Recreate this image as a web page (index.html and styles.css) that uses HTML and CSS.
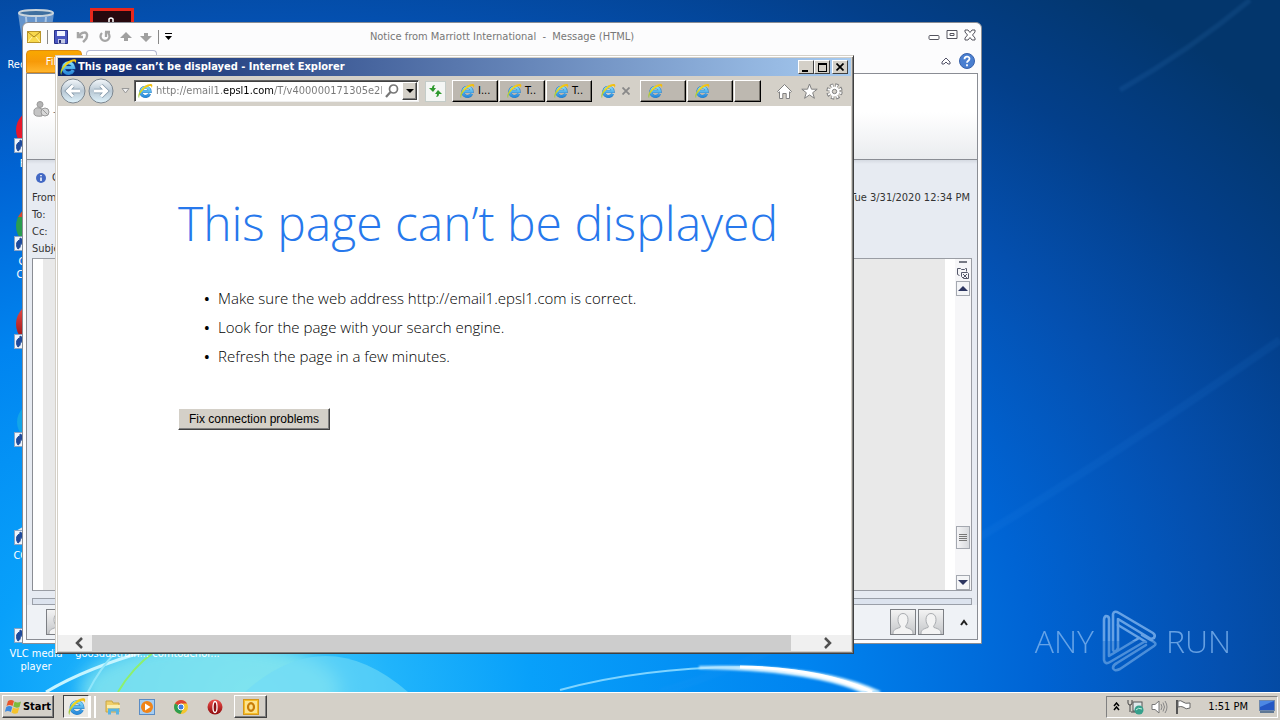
FILE: index.html
```html
<!DOCTYPE html>
<html lang="en">
<head>
<meta charset="utf-8">
<title>Desktop</title>
<link rel="stylesheet" href="styles.css">
</head>
<body>
<svg class="defs" aria-hidden="true">
  <defs>
    <linearGradient id="ieBlue" x1="0" y1="0" x2="0" y2="1"><stop offset="0" stop-color="#7fd8fa"/><stop offset="1" stop-color="#2a8cdc"/></linearGradient>
    <linearGradient id="swoosh" x1="0" y1="1" x2="1" y2="0"><stop offset="0" stop-color="#8cc63c"/><stop offset=".5" stop-color="#f4d81c"/><stop offset="1" stop-color="#f2b90c"/></linearGradient>
    <linearGradient id="orb" x1="0" y1="0" x2="0" y2="1"><stop offset="0" stop-color="#f4f8fb"/><stop offset=".5" stop-color="#b9c8d4"/><stop offset="1" stop-color="#dff3fc"/></linearGradient>
    <linearGradient id="red" x1="0" y1="0" x2="0" y2="1"><stop offset="0" stop-color="#f0504c"/><stop offset="1" stop-color="#8e0a0c"/></linearGradient>
    <linearGradient id="person" x1="0" y1="0" x2="0" y2="1"><stop offset="0" stop-color="#f4f4f4"/><stop offset="1" stop-color="#c4c6c9"/></linearGradient>
    <linearGradient id="mark" gradientUnits="userSpaceOnUse" x1="0" y1="0" x2="0" y2="62"><stop offset=".5" stop-color="#7fb4ee"/><stop offset=".5" stop-color="#5e9ce0"/></linearGradient>
    <filter id="soft"><feGaussianBlur stdDeviation="1"/></filter>
    <filter id="haze"><feGaussianBlur stdDeviation="9"/></filter>
  </defs>
  <symbol id="ie" viewBox="0 0 16 16">
    <path d="M12.600 10.800A4.600 4.600 0 1 1 13 8.500H4.600" fill="none" stroke="#2b7cc4" stroke-width="3.200"/>
    <path d="M12.600 10.800A4.600 4.600 0 1 1 13 8.500H4.600" fill="none" stroke="url(#ieBlue)" stroke-width="2.400"/>
    <path d="M2.100 15.200C-.2 13 3 6.400 7.600 3.300 11 .9 15 .2 15.300 2.200c.1.8-.2 1.800-.7 2.700.1-1.800-1.200-2.200-3.200-1.400C7.500 4.900 3.800 9 2.600 12.300c-.4 1.200-.5 2.100-.5 2.900z" fill="url(#swoosh)"/>
  </symbol>
  <symbol id="link" viewBox="0 0 15 15">
    <rect x=".5" y=".5" width="14" height="14" fill="#eef4fb" stroke="#8aa4c4"/>
    <path d="M4 13C1 9 3 4 6 4V2l5 3-3 4V7C5 8 8 11 4 13z" fill="#1d4a9c" stroke="#1d4a9c"/>
  </symbol>
  <symbol id="user" viewBox="0 0 26 26">
    <rect x=".5" y=".5" width="25" height="25" fill="url(#person)" stroke="#7c7f84"/>
    <path d="M3 25c0-4 2-5 7-6.500 1-.5 0-2-.7-3C7 12 7.500 4.500 13 4.500s6 7.500 3.700 11c-.7 1-1.700 2.500-.7 3 5 1.500 7 2.500 7 6.500" fill="#f3f3f3" stroke="#a9acb0"/>
  </symbol>
</svg>

<main class="desktop">
  <svg class="wallpaper" viewBox="0 0 1280 692" preserveAspectRatio="none" aria-hidden="true">
    <ellipse cx="210" cy="690" rx="130" ry="50" fill="#8ce9ee" opacity=".8" filter="url(#haze)"/>
    <path d="M245 692Q325 620 408 692z" fill="#6fdaf6" opacity=".6"/>
    <path d="M660 692Q850 640 1280 340" fill="none" stroke="#3d9cf5" stroke-width="8" opacity=".08" filter="url(#soft)"/>
    <path d="M1120 90Q1190 50 1250 0" fill="none" stroke="#4a93d8" stroke-width="5" opacity=".12" filter="url(#soft)"/>
    <path d="M46 692Q86 668 150 650" fill="none" stroke="#c6f5ff" stroke-width="3"/>
    <path d="M88 692Q100 668 116 652" fill="none" stroke="#8fe6fb" stroke-width="2"/>
    <path d="M118 692Q132 668 154 652" fill="none" stroke="#8df06c" stroke-width="2"/>
    <path d="M560 690Q640 668 740 667" fill="none" stroke="#7fd4ff" stroke-width="2"/>
    <path d="M700 667Q820 664 880 692H862Q810 670 700 668z" fill="#fff" stroke="#b8e6ff" stroke-width="2" filter="url(#soft)"/>
    <path d="M740 667Q820 668 872 692" fill="none" stroke="#fff" stroke-width="3"/>
  </svg>

  <div class="shortcut recycle">
    <svg width="40" height="46" viewBox="0 0 40 46"><path d="M2 4l6 42h24l6-42z" fill="#7ea6d4" opacity=".8"/><path d="M10 8l3 36M20 8v36M30 8l-3 36" stroke="#a8c4e4" stroke-width="2"/><ellipse cx="20" cy="4" rx="17" ry="3" fill="#3f6f9f" stroke="#c9d4dc" stroke-width="2"/></svg>
    <span>Recycle Bin</span>
  </div>
  <div class="shortcut game"><svg width="44" height="40" viewBox="0 0 44 40"><rect x="1.500" y="1.500" width="41" height="37" fill="#26080e" stroke="#e8281c" stroke-width="3"/><path d="M19 17V11q2-2 4 0v6" fill="none" stroke="#fff" stroke-width="1.500"/></svg></div>
  <div class="shortcut firefox"><svg width="44" height="46" viewBox="0 0 44 46"><circle cx="22" cy="22" r="20" fill="#e8182c"/><use href="#link" y="30" width="15" height="15"/></svg><span>Firefox</span></div>
  <div class="shortcut chrome"><svg width="44" height="46" viewBox="0 0 44 46"><circle cx="22" cy="20" r="20" fill="#2a9d4f"/><path d="M4 11a20 20 0 0 1 36 0z" fill="#d9442f"/><use href="#link" y="30" width="15" height="15"/></svg><span>Google<br>Chrome</span></div>
  <div class="shortcut opera"><svg width="44" height="46" viewBox="0 0 44 46"><ellipse cx="22" cy="20" rx="20" ry="21" fill="url(#red)"/><use href="#link" y="30" width="15" height="15"/></svg></div>
  <div class="shortcut skype"><svg width="44" height="46" viewBox="0 0 44 46"><circle cx="22" cy="20" r="19" fill="#12a5e8"/><use href="#link" y="30" width="15" height="15"/></svg></div>
  <div class="shortcut cleaner"><svg width="44" height="46" viewBox="0 0 44 46"><path d="M0 32l14-8v10z" fill="#dfeaf2"/><use href="#link" y="30" width="15" height="15"/></svg><span>CCleaner</span></div>
  <div class="shortcut vlc"><svg width="44" height="46" viewBox="0 0 44 46"><use href="#link" y="30" width="15" height="15"/></svg><span>VLC media<br>player</span></div>
  <div class="shortcut file-a"><span>goosdustrain...</span></div>
  <div class="shortcut file-b"><span>comtoachor...</span></div>

  <section class="mail" aria-label="Message">
    <header class="mail-title">
      <div class="quick">
        <svg width="14" height="12" viewBox="0 0 14 12"><rect x=".5" y=".5" width="13" height="11" fill="#f8d84c" stroke="#b8942a"/><path d="M1 11l4-5M13 11L9 6" fill="none" stroke="#fff3b0"/><path d="M1 1l6 5 6-5" fill="none" stroke="#a98420"/></svg>
        <i class="bar"></i>
        <button aria-label="Save"><svg width="14" height="14" viewBox="0 0 14 14"><path d="M.5.5h13v13h-13z" fill="#4a56c0" stroke="#27308a"/><path d="M3 1h8v5H3z" fill="#f0f3ff"/><path d="M4 9h7v4.500H4z" fill="#c3c9e4"/><path d="M5 10h2v3H5z" fill="#252c74"/></svg></button>
        <button aria-label="Undo"><svg width="14" height="14" viewBox="0 0 14 14"><path d="M2 2v5h5M3 6c2-4 9-5 8 0 0 3-2 4-4 6" fill="none" stroke="#a5a5a5" stroke-width="2.500"/></svg></button>
        <button aria-label="Redo"><svg width="14" height="14" viewBox="0 0 14 14"><path d="M4 3a4.500 4.500 0 1 0 6 0M7 2h5M8 2v5" fill="none" stroke="#a5a5a5" stroke-width="2.300"/></svg></button>
        <button aria-label="Previous"><svg width="12" height="10" viewBox="0 0 12 10"><path d="M6 0l6 6H8v3H4V6H0z" fill="#a0a0a0"/></svg></button>
        <button aria-label="Next"><svg width="12" height="10" viewBox="0 0 12 10"><path d="M6 10L0 4h4V1h4v3h4z" fill="#a0a0a0"/></svg></button>
        <i class="bar"></i>
        <button aria-label="Customize"><svg width="7" height="7" viewBox="0 0 7 7"><path d="M0 0h7v1H0zM0 3h7L3.500 7z"/></svg></button>
      </div>
      <h2>Notice from Marriott International&nbsp; -&nbsp; Message (HTML)</h2>
      <div class="mail-controls">
        <button aria-label="Minimize"><svg width="12" height="12" viewBox="0 0 12 12"><rect x="1" y="6.500" width="10" height="4" rx="1" fill="#fff" stroke="#55555f"/></svg></button>
        <button aria-label="Restore"><svg width="12" height="12" viewBox="0 0 12 12"><path d="M1 1.500h10v8H1zM4 4.500h4v2H4z" fill="#fff" stroke="#55555f"/></svg></button>
        <button aria-label="Close"><svg width="12" height="12" viewBox="0 0 12 12"><path d="M1 1h3l2 2.500L8 1h3v2L8.500 6 11 9v2H8L6 8.500 4 11H1V9l2.500-3L1 3z" fill="#fff" stroke="#55555f"/></svg></button>
      </div>
    </header>
    <div class="mail-tabs">
      <button class="file-tab">File</button><button class="message-tab" aria-label="Message"></button>
      <div class="help"><svg width="10" height="8" viewBox="0 0 10 8"><path d="M1 5l4-4 4 4v2H7L5 5 3 7H1z" fill="#fff" stroke="#55556a"/></svg>
      <button aria-label="Help"><svg width="16" height="16" viewBox="0 0 16 16"><circle cx="8" cy="8" r="7.500" fill="#4a7fd0" stroke="#3862ac"/><path d="M5.500 6.200c0-3.500 5-3.300 5-.4 0 2-2.500 2-2.500 4M8 11.200v2" fill="none" stroke="#fff" stroke-width="1.800"/></svg></button></div>
    </div>
    <div class="ribbon">
      <svg width="18" height="16" viewBox="0 0 18 16"><circle cx="7" cy="3.500" r="3" fill="#b4b4b4" stroke="#999"/><path d="M1 9q2-4 8-1v7q-7 1-8-2z" fill="#c4c4c4" stroke="#999"/><circle cx="12" cy="11" r="4" fill="#d8d8d8" stroke="#999"/><path d="M9.500 8.500l5 5" stroke="#999"/></svg><span>-</span>
    </div>
    <div class="mail-head">
      <p class="info"><svg width="10" height="10" viewBox="0 0 10 10"><circle cx="5" cy="5" r="5" fill="#4268c4"/><path d="M5 2v1.200M5 4.500V8" stroke="#fff" stroke-width="1.500"/></svg><span>Click here</span></p>
      <p><span>From:</span><time>Tue 3/31/2020 12:34 PM</time></p>
      <p>To:</p>
      <p>Cc:</p>
      <p>Subject:</p>
    </div>
    <div class="mail-body">
      <div class="paper"></div>
      <div class="vscroll">
        <i class="split"></i>
        <svg width="14" height="14" viewBox="0 0 14 14"><path d="M1.500 2.500h3l1 1h3l1-1h1v3M1.500 2.500v6l2 1M5.500 6.500h6l1 1v5h-5l-2-2zM7 8l4 4M11 8l-4 4" fill="none" stroke="#55586a"/></svg>
        <button aria-label="Scroll up"><svg width="10" height="6" viewBox="0 0 10 6"><path d="M0 5l5-5 5 5z" fill="#2c3560"/></svg></button>
        <i class="track"></i>
        <button class="grip" aria-label="Scroll position"><svg width="8" height="8" viewBox="0 0 8 8"><path d="M0 .5h8M0 2.500h8M0 4.500h8M0 6.500h8" stroke="#777"/></svg></button>
        <i class="track short"></i>
        <button aria-label="Scroll down"><svg width="10" height="6" viewBox="0 0 10 6"><path d="M0 0h10L5 5z" fill="#2c3560"/></svg></button>
      </div>
    </div>
    <div class="splitter"></div>
    <footer class="people">
      <svg width="26" height="26"><use href="#user"/></svg>
      <span class="grow"></span>
      <svg width="26" height="26"><use href="#user"/></svg>
      <svg width="26" height="26"><use href="#user"/></svg>
      <button aria-label="Expand"><svg width="8" height="7" viewBox="0 0 8 7"><path d="M1 6l3-4 3 4" fill="none" stroke="#222" stroke-width="2"/></svg></button>
    </footer>
  </section>

  <section class="browser" aria-label="Internet Explorer">
    <header class="titlebar">
      <svg width="18" height="18"><use href="#ie"/></svg>
      <h2>This page can’t be displayed - Internet Explorer</h2>
      <div class="controls">
        <button aria-label="Minimize"><svg width="9" height="9" viewBox="0 0 9 9"><path d="M0 7h6v2H0z"/></svg></button>
        <button aria-label="Maximize"><svg width="9" height="9" viewBox="0 0 9 9"><path d="M0 0h9v9H0zM1 2v6h7V2z" fill-rule="evenodd"/></svg></button>
        <button class="close" aria-label="Close"><svg width="8" height="8" viewBox="0 0 8 8"><path d="M.5.5l7 7M7.500.5l-7 7" stroke="#000" stroke-width="1.700"/></svg></button>
      </div>
    </header>
    <nav class="toolbar">
      <div class="nav">
        <button aria-label="Back"><svg width="26" height="26" viewBox="0 0 26 26"><circle cx="13" cy="13" r="12" fill="url(#orb)" stroke="#7d8790"/><path d="M20 13H8M13 7.500L7.500 13l5.500 5.500" fill="none" stroke="#8196a8" stroke-width="4.500"/><path d="M20 13H8M13 7.500L7.500 13l5.500 5.500" fill="none" stroke="#fff" stroke-width="3"/></svg></button>
        <button aria-label="Forward"><svg width="26" height="26" viewBox="0 0 26 26"><circle cx="13" cy="13" r="12" fill="url(#orb)" stroke="#7d8790"/><path d="M6 13h12M13 7.500l5.500 5.500-5.500 5.500" fill="none" stroke="#8196a8" stroke-width="4.500"/><path d="M6 13h12M13 7.500l5.500 5.500-5.500 5.500" fill="none" stroke="#fff" stroke-width="3"/></svg></button>
        <button class="recent" aria-label="Recent pages"><svg width="9" height="6" viewBox="0 0 9 6"><path d="M1 .5h7L4.500 5z" fill="#eee" stroke="#999"/></svg></button>
      </div>
      <div class="address">
        <svg width="16" height="16"><use href="#ie"/></svg>
        <input type="text" aria-label="Address" value="http://email1.epsl1.com/T/v400000171305e2ba">
        <svg width="14" height="14" viewBox="0 0 14 14"><circle cx="8.500" cy="5" r="4" fill="#fff" stroke="#777" stroke-width="1.700"/><path d="M5.500 8L1 13" stroke="#777" stroke-width="2.200"/></svg>
        <button class="raised" aria-label="Address list"><svg width="8" height="4" viewBox="0 0 8 4"><path d="M0 0h8L4 4z"/></svg></button>
      </div>
      <button class="refresh" aria-label="Refresh"><svg width="15" height="14" viewBox="0 0 15 14"><path d="M7 1Q4 1 4 4H1l4 4 3-4H6Q6 2 7 1zM8 13q3 0 3-3h3l-4-4-3 4h2q0 2-1 3z" fill="#2e9a2e"/></svg></button>
      <div class="tabs">
        <button class="tab"><svg width="16" height="16"><use href="#ie"/></svg>I...</button>
        <button class="tab"><svg width="16" height="16"><use href="#ie"/></svg>T..</button>
        <button class="tab"><svg width="16" height="16"><use href="#ie"/></svg>T..</button>
        <button class="tab current" aria-label="Current tab"><svg width="16" height="16"><use href="#ie"/></svg><svg width="8" height="8" viewBox="0 0 8 8"><path d="M.5.5l7 7M7.500.5l-7 7" stroke="#888" stroke-width="1.800"/></svg></button>
        <button class="tab" aria-label="Tab 5"><svg width="16" height="16"><use href="#ie"/></svg></button>
        <button class="tab" aria-label="Tab 6"><svg width="16" height="16"><use href="#ie"/></svg></button>
        <button class="tab new" aria-label="New tab"></button>
      </div>
      <div class="tools">
        <button aria-label="Home"><svg width="17" height="17" viewBox="0 0 17 17"><path d="M8.500 1.500l7 7-1.200 1-.8-.7V15.500h-3.300v-5H6.800v5H3.500V8.800l-.8.700-1.200-1z" fill="#fff" stroke="#808080"/></svg></button>
        <button aria-label="Favorites"><svg width="17" height="17" viewBox="0 0 17 17"><path d="M8.500 1l2 5.200h5.700l-4.500 3.500 1.700 5.600-4.900-3.400-4.900 3.400 1.700-5.600L.8 6.200h5.700z" fill="#fff" stroke="#808080"/></svg></button>
        <button aria-label="Tools"><svg width="17" height="17" viewBox="0 0 17 17"><circle cx="8.500" cy="8.500" r="6.500" fill="none" stroke="#808080" stroke-width="3.400" stroke-dasharray="3.200 1.900"/><circle cx="8.500" cy="8.500" r="6" fill="none" stroke="#fff" stroke-width="2.400" stroke-dasharray="1.700 3" stroke-dashoffset="-.7"/><circle cx="8.500" cy="8.500" r="4.800" fill="#fff"/><circle cx="8.500" cy="8.500" r="2.200" fill="#d4d0c8" stroke="#808080"/></svg></button>
      </div>
    </nav>
    <article class="page">
      <h1>This page can’t be displayed</h1>
      <ul>
        <li>Make sure the web address http://email1.epsl1.com is correct.</li>
        <li>Look for the page with your search engine.</li>
        <li>Refresh the page in a few minutes.</li>
      </ul>
      <button class="raised fix">Fix connection problems</button>
    </article>
    <div class="hscroll">
      <button aria-label="Scroll left"><svg width="10" height="12" viewBox="0 0 10 12"><path d="M8 1L3 6l5 5" fill="none" stroke="#505050" stroke-width="2.500"/></svg></button>
      <i class="thumb"></i>
      <button aria-label="Scroll right"><svg width="10" height="12" viewBox="0 0 10 12"><path d="M2 1l5 5-5 5" fill="none" stroke="#505050" stroke-width="2.500"/></svg></button>
    </div>
  </section>

  <div class="watermark">
    <span>ANY</span>
    <svg width="56" height="62" viewBox="0 0 56 62" fill="none" stroke="url(#mark)" stroke-width="2.600" stroke-linejoin="round" stroke-linecap="round"><path d="M7 9Q7 6 4 6Q2 7 2 10V50Q3 55 8 52L42 32M7 9V46L37 28"/><path d="M16 38Q13 44 11 40V4Q12 0 17 3L51 23Q54 25 52 28L49 29 16 9V38"/><path d="M16 15L44 32M40 25L52 32Q55 34 52 36L18 59Q12 62 11 58Q11 55 15 53L44 35"/></svg>
    <span>RUN</span>
  </div>
</main>

<footer class="taskbar">
  <button class="raised start"><svg width="17" height="16" viewBox="0 0 17 16"><path d="M3 2q3-2 6 0L7.500 7q-3-2-6 0z" fill="#e8562c"/><path d="M9.600 2.500q3 2 6.400 0L14.500 8q-3 1.500-6.200-.5z" fill="#7dbb3c"/><path d="M1.300 8q3-2 6 0L5.800 13q-3-2-6 0z" fill="#3e8be0"/><path d="M8 8.500q3 2 6.200.3L12.700 14q-3 1.700-6.200-.5z" fill="#f5c32c"/></svg>Start</button>
  <div class="launch">
    <button class="pressed" aria-label="Internet Explorer"><svg width="19" height="19"><use href="#ie"/></svg></button>
    <i class="edges"></i>
    <button aria-label="Explorer"><svg width="16" height="16" viewBox="0 0 16 16"><path d="M1 2h6l1 2h6v9H1z" fill="#f0cf68" stroke="#c8a644"/><path d="M2 6h13v3H2z" fill="#fbeeb0"/><path d="M3 15.500v-6h11v6h-3v-3H6v3z" fill="#58b4e4"/></svg></button>
    <button aria-label="Media Player"><svg width="16" height="16" viewBox="0 0 16 16"><rect x=".5" y=".5" width="15" height="15" fill="#a5cdf2" stroke="#5a8cc4"/><circle cx="8" cy="8" r="6" fill="#f08418"/><path d="M6 4.500v7L11.500 8z" fill="#fff"/></svg></button>
    <button aria-label="Chrome"><svg width="14" height="14" viewBox="0 0 14 14"><circle cx="7" cy="7" r="7" fill="#f4c62e"/><path d="M7 7L1 3.500A7 7 0 0 1 13 3.500H7z" fill="#dc4434"/><path d="M7 7L1 3.500A7 7 0 0 0 6.500 14L9 9z" fill="#2e9e50"/><circle cx="7" cy="7" r="3" fill="#3f7de0" stroke="#fff"/></svg></button>
    <button aria-label="Opera"><svg width="16" height="16" viewBox="0 0 16 16"><circle cx="8" cy="8" r="7.500" fill="url(#red)"/><ellipse cx="8" cy="8" rx="2" ry="5.500" fill="#8d1013" stroke="#fff" stroke-width="1.300"/></svg></button>
    <button class="raised app" aria-label="Outlook"><svg width="16" height="16" viewBox="0 0 16 16"><rect x=".5" y=".5" width="15" height="15" fill="#f6bd28" stroke="#d6971a"/><path d="M2 2h12v12H2z" fill="#fde38c"/><ellipse cx="8" cy="8" rx="3" ry="3.800" fill="none" stroke="#c87d08" stroke-width="2.200"/></svg></button>
  </div>
  <div class="tray">
    <svg width="7" height="9" viewBox="0 0 7 9"><path d="M1 4l2.500-3L6 4M1 8l2.500-3L6 8" fill="none" stroke="#000" stroke-width="1.500"/></svg>
    <svg width="17" height="16" viewBox="0 0 17 16"><path d="M1 1v3q0 2 2 2v7M5 1v3q0 2-2 2" fill="none" stroke="#444"/><rect x="6" y="3" width="9" height="9" fill="#dfe8ea" stroke="#555"/><path d="M4 13h7" stroke="#444"/><circle cx="12" cy="11" r="4.500" fill="#37a08c"/><path d="M9 11q2-3 6-1" fill="none" stroke="#c6f0e0"/></svg>
    <svg width="17" height="16" viewBox="0 0 17 16"><path d="M1 5.500h3L8 2v12l-4-3.500H1z" fill="#fff" stroke="#777"/><path d="M10 5q2 3 0 6M12 3.500q3 4.500 0 9M14 2q4 6 0 12" fill="none" stroke="#888"/></svg>
    <svg width="17" height="16" viewBox="0 0 17 16"><path d="M2 1v14" stroke="#555" stroke-width="2"/><path d="M3 2q3-1 5 1 2 2 7 1v5q-4 2-7-1-2-1-5 0z" fill="#fff" stroke="#666"/></svg>
    <time>1:51 PM</time>
    <svg width="16" height="15" viewBox="0 0 16 15"><rect x=".5" y="1.500" width="15" height="10" fill="#2458c4" stroke="#6f88ac"/><path d="M1 2h14L1 8z" fill="#4c88e4"/><path d="M1 13h14" stroke="#607894" stroke-width="2"/></svg>
  </div>
</footer>
</body>
</html>
```
FILE: styles.css
```css
* { box-sizing: border-box; }
body {
  margin: 0;
  height: 100vh;
  display: flex;
  flex-direction: column;
  overflow: hidden;
  font: 11px/14px "DejaVu Sans Condensed", "DejaVu Sans", sans-serif;
  color: #000;
}
h1, h2, p, ul { margin: 0; padding: 0; font-weight: normal; font-size: inherit; }
svg { display: block; flex: none; }
button { font: inherit; color: inherit; background: none; border: 0; padding: 0; display: flex; align-items: center; justify-content: center; flex: none; }
.defs { position: absolute; width: 0; height: 0; }
.grow { flex: 1; }
.raised { background: #d4d0c8; border: 1px solid; border-color: #fff #404040 #404040 #fff; box-shadow: inset -1px -1px #808080; }

.desktop {
  flex: 1;
  position: relative;
  overflow: hidden;
  background: radial-gradient(1150px 800px at 20% 100%, #4ccff8 0%, #20b4fb 12%, #08a0fa 24%, #0084f0 48%, #0064d4 68%, #0450b0 84%, #033f8a 100%, #03366c 115%);
}
.wallpaper { position: absolute; inset: 0; width: 100%; height: 100%; }
.shortcut { position: absolute; left: 0; width: 72px; display: flex; flex-direction: column; align-items: center; text-align: center; color: #fff; line-height: 13px; gap: 3px; }
.recycle { top: 9px; }
.game { left: 76px; top: 8px; }
.firefox { top: 108px; }
.chrome { top: 206px; }
.opera { top: 304px; }
.skype { top: 402px; }
.cleaner { top: 500px; }
.vlc { top: 598px; }
.file-a { left: 76px; top: 647px; }
.file-b { left: 150px; top: 647px; }

.mail {
  position: absolute; left: 22px; top: 22px; right: 298px; bottom: 48px;
  display: flex; flex-direction: column;
  padding: 0 3px 3px;
  background: #fcfcfd;
  border: 1px solid #8a8d94;
  border-radius: 6px 6px 0 0;
}
.mail-title { height: 27px; display: grid; grid-template-columns: 1fr auto 1fr; align-items: center; color: #777; }
.quick { display: flex; align-items: center; gap: 8px; padding-left: 1px; }
.quick .bar { margin: 0 -2px; }
.bar { width: 1px; height: 14px; background: #888; }
.mail-controls { display: flex; justify-content: flex-end; gap: 6px; padding: 0 2px 4px 0; }
.mail-tabs { height: 24px; display: flex; gap: 4px; border-bottom: 1px solid #8a8d94; }
.file-tab { width: 56px; color: #fff; background: linear-gradient(#f9a800, #f79a08 50%, #ffb52c); border: 1px solid #dc8a10; border-radius: 4px 4px 0 0; }
.message-tab { width: 71px; background: #fff; border: 1px solid #b4b8d0; border-bottom: 0; border-radius: 4px 4px 0 0; }
.help { flex: 1; display: flex; justify-content: flex-end; align-items: center; gap: 8px; padding: 0 3px 2px 0; }
.ribbon { height: 86px; display: flex; gap: 2px; padding: 27px 0 0 6px; background: linear-gradient(#fff 45%, #eaecef); border: 1px solid #8a8d94; border-width: 0 1px 1px; color: #777; line-height: 22px; }
.mail-head { padding: 9px 7px 0 5px; line-height: 17px; background: linear-gradient(#d5dae2, #e7ebf2 4px); border: 1px solid #8a8d94; border-width: 0 1px; color: #333; display: flex; flex-direction: column; height: 98px; }
.mail-head p { display: flex; justify-content: space-between; }
.mail-head .info { justify-content: flex-start; align-items: center; gap: 6px; padding: 0 0 3px 4px; }
.mail-body { flex: 1; display: flex; border: 1px solid #8a8d94; border-width: 0 1px; background: #e7ebf2; padding: 0 5px; }
.paper { flex: 1; background: #e9e9e9; border: 1px solid #9a9da4; border-width: 1px 0 1px 1px; border-left-color: #8a8d94; box-shadow: inset 10px 0 #fff, inset -10px 0 #fff; }
.vscroll { width: 17px; display: flex; flex-direction: column; align-items: center; gap: 1px; border: 1px solid #9a9da4; border-left: 0; background: #f6f6f8; padding-top: 2px; }
.split { width: 8px; height: 2px; background: #777a84; margin-bottom: 2px; }
.vscroll button { width: 14px; height: 15px; background: #f4f5f7; border: 1px solid #a4a8b0; }
.vscroll .grip { height: 23px; background: linear-gradient(90deg, #f4f4f6, #d8dade); }
.track { flex: 1; }
.track.short { flex: none; height: 24px; }
.splitter { padding: 7px 5px 0; background: #e7ebf2; border: 1px solid #8a8d94; border-width: 0 1px; }
.splitter::after { content: ""; display: block; height: 5px; background: #dce3ee; border: 1px solid #9a9fa8; }
.people { height: 35px; display: flex; align-items: center; gap: 2px; padding: 0 9px 0 19px; background: #eff2f6; border: 1px solid #8a8d94; border-top: 0; }
.people button { margin-left: 14px; }

.browser {
  position: absolute; left: 55px; top: 55px; right: 426px; bottom: 38px;
  display: flex; flex-direction: column;
  padding: 2px;
  background: #d4d0c8;
  border: 1px solid; border-color: #d4d0c8 #404040 #404040 #d4d0c8;
  box-shadow: inset 1px 1px #fff, inset -1px -1px #808080;
}
.titlebar { height: 18px; display: flex; align-items: center; gap: 1px; padding: 0 3px 0 1px; background: linear-gradient(90deg, #0a246a, #a6caf0); color: #fff; }
.titlebar h2 { flex: 1; font-weight: bold; }
.controls { display: flex; }
.controls button { width: 16px; height: 14px; background: #d4d0c8; border: 1px solid; border-color: #fff #404040 #404040 #fff; }
.controls .close { margin-left: 2px; }
.toolbar { height: 30px; display: flex; align-items: center; padding: 0 8px 0 2px; }
.nav { display: flex; gap: 2px; }
.recent { width: 18px; }
.address { flex: 1; display: flex; align-items: center; gap: 3px; height: 22px; margin-right: 6px; padding: 1px 1px 1px 2px; background: #fff; border: 1px solid; border-color: #606060 #eee #eee #606060; box-shadow: inset 1px 1px #404040; }
.address input {
  flex: 1; min-width: 0; border: 0; padding: 0; font: inherit; outline: 0;
  background: linear-gradient(90deg, #777 67px, #000 67px 118px, #777 118px);
  -webkit-background-clip: text; background-clip: text; color: transparent;
}
.address button { width: 15px; height: 18px; }
.refresh { width: 21px; height: 21px; background: #f4f6f4; border: 1px solid #c4ccc8; margin-right: 6px; }
.tabs { display: flex; gap: 1px; }
.tab { width: 46px; height: 22px; justify-content: flex-start; gap: 3px; padding-left: 6px; background: #bdb8b0; border: 1px solid; border-color: #fff #000 #000 #fff; box-shadow: inset -1px -1px #77736c; }
.tab.current { background: none; border-color: transparent; box-shadow: none; gap: 6px; }
.tab.new { width: 27px; }
.tools { display: flex; gap: 8px; margin-left: 15px; }
.page { flex: 1; background: #fff; padding: 85px 20px 0 120px; }
.page h1 { font: 300 48px/64px "Open Sans", "Noto Sans", sans-serif; color: #2778ec; white-space: nowrap; }
.page ul { margin-top: 29px; padding-left: 40px; font: 300 15px/29px "Open Sans", "Noto Sans", sans-serif; list-style: none; }
.page li { display: flex; }
.page li::before { content: "•"; width: 14px; margin-left: -14px; font-weight: 600; }
.fix { margin-top: 37px; width: 152px; height: 22px; font: 12px/16px "Liberation Sans", Arial, sans-serif; }
.hscroll { height: 16px; display: flex; background: #f0f0f0; }
.hscroll button { width: 34px; padding-left: 8px; }
.hscroll .thumb { flex: 1; background: #cdcdcd; }
.hscroll button:last-child { width: 60px; padding: 0 0 0 14px; }

.watermark { position: absolute; right: 49px; bottom: 20px; display: flex; align-items: center; gap: 8px; opacity: .8; color: #7fb4ee; font: 300 32px/62px "Open Sans", "Noto Sans", sans-serif; }

.taskbar { height: 28px; display: flex; align-items: center; gap: 9px; padding: 0 2px; background: #d4d0c8; border-top: 1px solid #fff; }
.start { width: 52px; height: 23px; gap: 1px; font-weight: bold; }
.launch { display: flex; align-items: center; }
.launch button { width: 34px; height: 23px; }
.launch .pressed { width: 26px; background: #ebe9e4; border: 1px solid; border-color: #404040 #fff #fff #404040; }
.edges { width: 7px; height: 22px; border: 1px solid #fff; border-width: 0 2px; }
.launch .app { width: 33px; margin-left: 2px; }
.tray { margin-left: auto; height: 22px; display: flex; align-items: center; gap: 7px; padding: 0 2px 0 6px; border: 1px solid; border-color: #808080 #fff #fff #808080; }
.tray time { margin: 0 4px 0 9px; }
```
